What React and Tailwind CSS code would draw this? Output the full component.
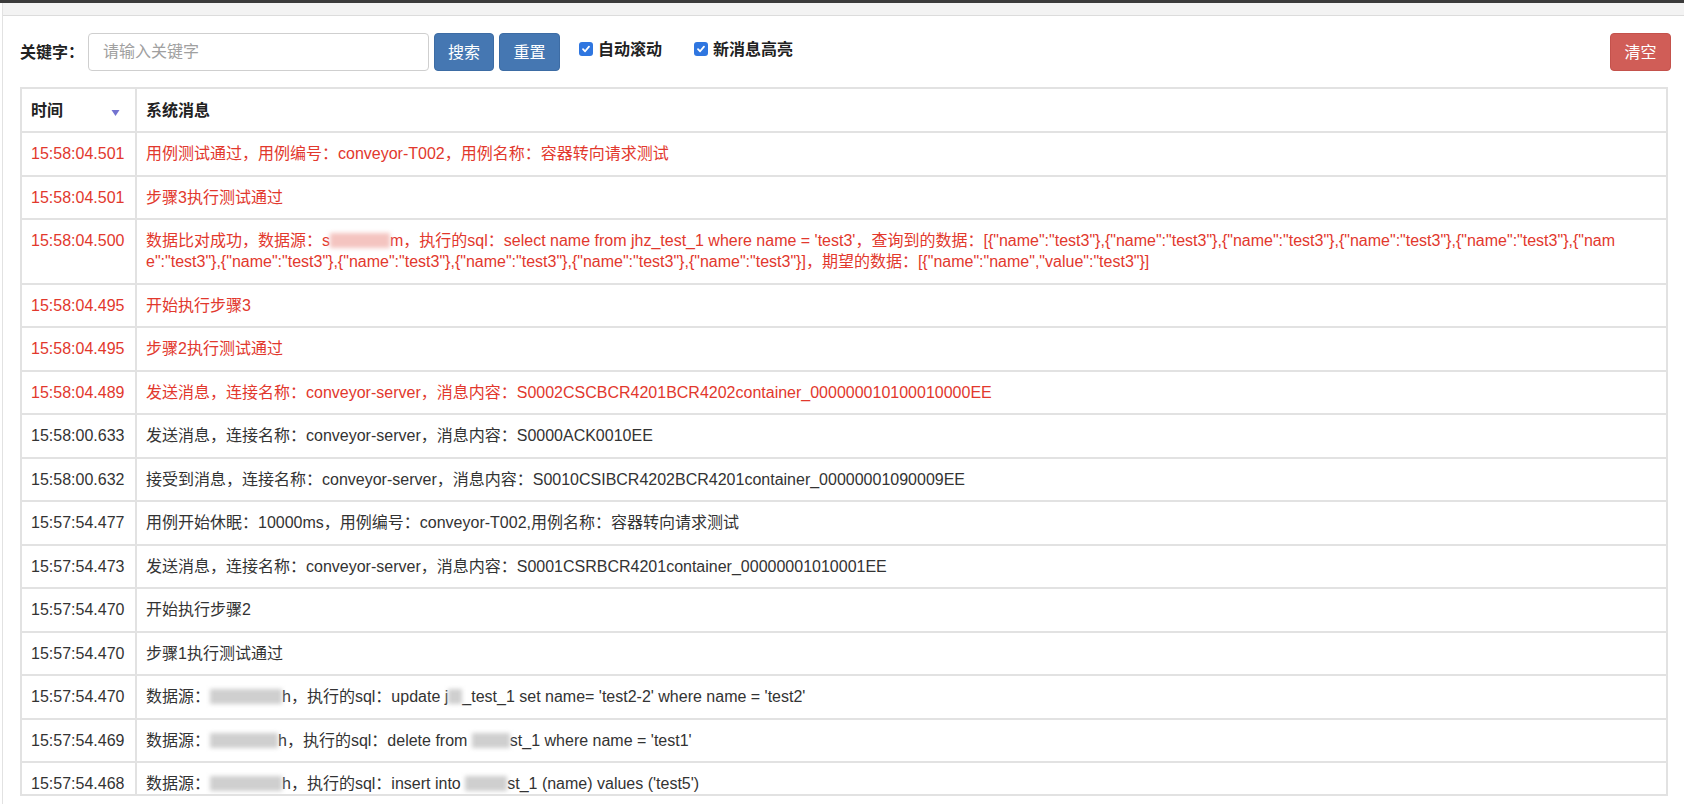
import React, { useState } from 'react';

const Blur = ({ w, red }) => (
  <span
    className={
      'inline-block h-[15px] align-[-2px] blur-[2px] ' +
      (red ? 'bg-[#f4c4c0]' : 'bg-[#cfcfcf]')
    }
    style={{ width: w }}
  />
);

const items = '{"name":"test3"},';

const logs = [
  { time: '15:58:04.501', red: true, msg: '用例测试通过，用例编号：conveyor-T002，用例名称：容器转向请求测试' },
  { time: '15:58:04.501', red: true, msg: '步骤3执行测试通过' },
  {
    time: '15:58:04.500',
    red: true,
    msg: (
      <>
        数据比对成功，数据源：s<Blur w={60} red />m，执行的sql：select name from jhz_test_1 where name = 'test3'，查询到的数据：[
        {items.repeat(5)}
        {'{"nam'}
        <br />
        {'e":"test3"},'}
        {items.repeat(4)}
        {'{"name":"test3"}]'}，期望的数据：[{'{"name":"name","value":"test3"}'}]
      </>
    ),
  },
  { time: '15:58:04.495', red: true, msg: '开始执行步骤3' },
  { time: '15:58:04.495', red: true, msg: '步骤2执行测试通过' },
  { time: '15:58:04.489', red: true, msg: '发送消息，连接名称：conveyor-server，消息内容：S0002CSCBCR4201BCR4202container_000000010100010000EE' },
  { time: '15:58:00.633', msg: '发送消息，连接名称：conveyor-server，消息内容：S0000ACK0010EE' },
  { time: '15:58:00.632', msg: '接受到消息，连接名称：conveyor-server，消息内容：S0010CSIBCR4202BCR4201container_00000001090009EE' },
  { time: '15:57:54.477', msg: '用例开始休眠：10000ms，用例编号：conveyor-T002,用例名称：容器转向请求测试' },
  { time: '15:57:54.473', msg: '发送消息，连接名称：conveyor-server，消息内容：S0001CSRBCR4201container_00000001010001EE' },
  { time: '15:57:54.470', msg: '开始执行步骤2' },
  { time: '15:57:54.470', msg: '步骤1执行测试通过' },
  {
    time: '15:57:54.470',
    msg: (
      <>
        数据源：<Blur w={72} />h，执行的sql：update j<Blur w={14} />_test_1 set name= 'test2-2' where name = 'test2'
      </>
    ),
  },
  {
    time: '15:57:54.469',
    msg: (
      <>
        数据源：<Blur w={68} />h，执行的sql：delete from <Blur w={38} />st_1 where name = 'test1'
      </>
    ),
  },
  {
    time: '15:57:54.468',
    msg: (
      <>
        数据源：<Blur w={72} />h，执行的sql：insert into <Blur w={42} />st_1 (name) values ('test5')
      </>
    ),
  },
];

const Check = ({ checked, onChange, label }) => (
  <label className="flex items-center gap-[5px] mb-[6px] cursor-pointer select-none" onClick={onChange}>
    <span className="w-[14px] h-[14px] rounded-[3px] bg-[#2f76e0] flex items-center justify-center">
      {checked && (
        <svg width="10" height="10" viewBox="0 0 10 10">
          <path d="M2 5.2 L4.1 7.3 L8 2.6" stroke="white" strokeWidth="1.8" fill="none" strokeLinecap="round" strokeLinejoin="round" />
        </svg>
      )}
    </span>
    <span className="font-bold text-[#222]">{label}</span>
  </label>
);

const App = () => {
  const [keyword, setKeyword] = useState('');
  const [autoScroll, setAutoScroll] = useState(true);
  const [highlight, setHighlight] = useState(true);

  return (
    <div className="min-h-screen bg-white text-[16px] leading-[21px] text-[#333] font-['Liberation_Sans','Noto_Sans_CJK_SC',sans-serif]">
      <div className="h-[3px] bg-[#3b3b3b]" />
      <div className="ml-[2px] border-l border-[#e2e2e2] min-h-[801px]">
        <div className="h-[13px] bg-[#f3f3f3] border-b border-[#dcdcdc]" />

        {/* toolbar */}
        <div className="flex items-center justify-between pt-[17px] pl-[17px] pr-[13px]">
          <div className="flex items-center">
            <span className="font-bold text-[#222] mr-[4px]">关键字：</span>
            <input
              className="w-[341px] h-[38px] border border-[#cfcfcf] rounded-[4px] px-[14px] outline-none placeholder:text-[#a0a0a0]"
              placeholder="请输入关键字"
              value={keyword}
              onChange={(e) => setKeyword(e.target.value)}
            />
            <button className="ml-[5px] w-[60px] h-[38px] rounded-[4px] bg-[#4577b2] border border-[#3d6ca4] text-white">搜索</button>
            <button className="ml-[5px] w-[61px] h-[38px] rounded-[4px] bg-[#4577b2] border border-[#3d6ca4] text-white" onClick={() => setKeyword('')}>重置</button>
            <div className="ml-[19px]">
              <Check checked={autoScroll} onChange={() => setAutoScroll(!autoScroll)} label="自动滚动" />
            </div>
            <div className="ml-[32px]">
              <Check checked={highlight} onChange={() => setHighlight(!highlight)} label="新消息高亮" />
            </div>
          </div>
          <button className="w-[61px] h-[38px] rounded-[4px] bg-[#d05d57] border border-[#c4524c] text-white">清空</button>
        </div>

        {/* log table */}
        <div className="mt-[16px] ml-[17px] mr-[16px] h-[709px] overflow-hidden border-b-2 border-[#e2e2e2]">
          <table className="w-full border-collapse">
            <thead>
              <tr>
                <th className="w-[115px] border-2 border-[#e2e2e2] px-[9px] py-[10.5px] text-left font-bold text-[#222]">
                  <div className="flex items-center justify-between">
                    <span>时间</span>
                    <svg width="9" height="8" viewBox="0 0 9 8" className="mt-[6px] mr-[6px]">
                      <path d="M0.5 1 L8.5 1 L4.5 7 Z" fill="#7373d0" />
                    </svg>
                  </div>
                </th>
                <th className="border-2 border-[#e2e2e2] px-[9px] py-[10.5px] text-left font-bold text-[#222]">系统消息</th>
              </tr>
            </thead>
            <tbody>
              {logs.map((row, i) => (
                <tr key={i} className={row.red ? 'text-[#e2382d]' : 'text-[#333]'}>
                  <td className="border-2 border-[#e2e2e2] px-[9px] py-[10.25px] align-top whitespace-nowrap">{row.time}</td>
                  <td className="border-2 border-[#e2e2e2] px-[9px] py-[10.25px] align-top">{row.msg}</td>
                </tr>
              ))}
            </tbody>
          </table>
        </div>
      </div>
    </div>
  );
};

export default App;
